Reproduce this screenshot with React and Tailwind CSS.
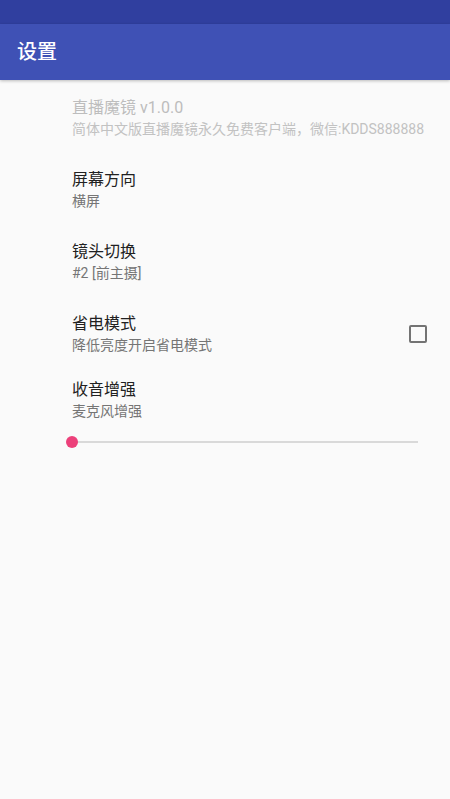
const FONT = "font-['Roboto','Noto_Sans_CJK_SC',sans-serif]"

function Pref({ title, summary, disabled, children }) {
  return (
    <div className="flex items-center h-[72px] pl-[72px] pr-[23px]">
      <div className="flex-1 min-w-0">
        <p className={`text-[16px] leading-[22px] ${disabled ? 'text-[#bdbdbd]' : 'text-[#212121]'}`}>{title}</p>
        <p className={`text-[14px] leading-[20px] whitespace-nowrap ${disabled ? 'text-[#c2c2c2]' : 'text-[#757575]'}`}>{summary}</p>
      </div>
      {children}
    </div>
  )
}

export default function App() {
  return (
    <div className={`w-[450px] h-[799px] bg-[#fafafa] flex flex-col ${FONT}`}>
      <div className="h-[24px] bg-[#303f9f]" />
      <div className="h-[56px] bg-[#3f51b5] flex items-center px-[17px] shadow-[0_1px_3px_rgba(0,0,0,0.25)]">
        <h1 className="text-white text-[20px] font-medium">设置</h1>
      </div>

      <div className="flex flex-col pt-[2px]">
        <Pref title="直播魔镜 v1.0.0" summary="简体中文版直播魔镜永久免费客户端，微信:KDDS888888" disabled />
        <Pref title="屏幕方向" summary="横屏" />
        <Pref title="镜头切换" summary="#2 [前主摄]" />
        <Pref title="省电模式" summary="降低亮度开启省电模式">
          <div className="w-[18px] h-[18px] border-2 border-[#737373] rounded-[2px]" />
        </Pref>

        <div className="pl-[72px] pr-[32px] pt-[9px]">
          <p className="text-[16px] leading-[22px] text-[#212121]">收音增强</p>
          <p className="text-[14px] leading-[20px] text-[#757575]">麦克风增强</p>
          <div className="relative h-[12px] mt-[15px] -ml-[6px] flex items-center">
            <div className="h-[2px] w-full bg-[#d9d9d9] ml-[6px]" />
            <div className="absolute left-0 top-0 w-[12px] h-[12px] rounded-full bg-[#ec407a]" />
          </div>
        </div>
      </div>
    </div>
  )
}
